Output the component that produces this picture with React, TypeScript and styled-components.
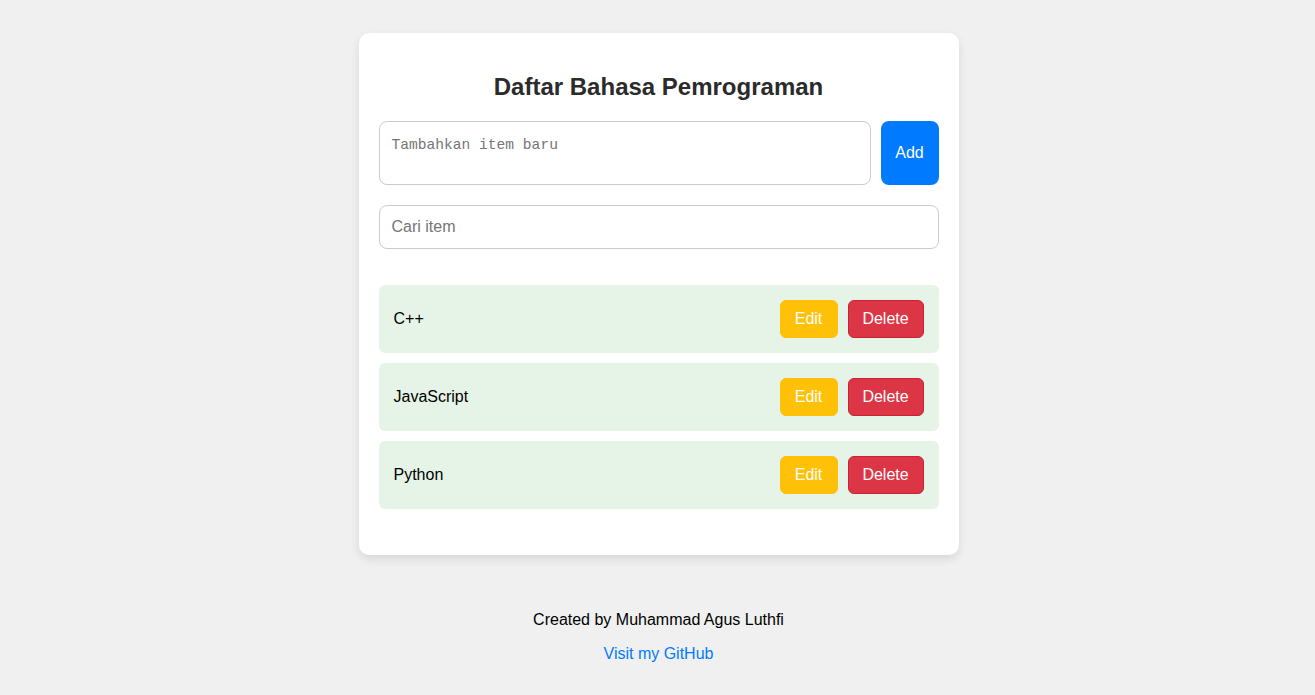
import React, { useState } from "react";
import styled, { createGlobalStyle } from "styled-components";

const GlobalStyle = createGlobalStyle`
  html, body {
    margin: 0;
    padding: 0;
    background: #f0f0f0;
    font-family: "Liberation Sans", Arial, sans-serif;
  }
`;

const Page = styled.div`
  min-height: 695px;
  box-sizing: border-box;
  padding: 33px 0 0 2px;
  display: flex;
  flex-direction: column;
  align-items: center;
`;

const Card = styled.div`
  width: 600px;
  box-sizing: border-box;
  background: #fff;
  border-radius: 10px;
  padding: 20px;
  box-shadow: 0 4px 10px rgba(0, 0, 0, 0.1);
`;

const Title = styled.h2`
  margin: 20px 0;
  text-align: center;
  font-size: 24px;
  line-height: 28px;
  font-weight: bold;
  color: #2b2b2b;
`;

const AddRow = styled.div`
  display: flex;
  gap: 10px;
  margin-bottom: 20px;
`;

const TextArea = styled.textarea`
  flex: 1;
  height: 64px;
  box-sizing: border-box;
  padding: 15px 12px 9px;
  border: 1px solid #ccc;
  border-radius: 8px;
  resize: none;
  font-family: "Liberation Mono", monospace;
  font-size: 14.6px;
  line-height: 17px;
  &::placeholder {
    color: #757575;
  }
`;

const AddButton = styled.button`
  width: 58px;
  height: 64px;
  border: none;
  border-radius: 8px;
  background: #007bff;
  color: #fff;
  font-family: "Liberation Sans", Arial, sans-serif;
  font-size: 16px;
`;

const SearchInput = styled.input`
  display: block;
  width: 100%;
  height: 44px;
  box-sizing: border-box;
  padding: 0 12px;
  border: 1px solid #ccc;
  border-radius: 8px;
  font-family: "Liberation Sans", Arial, sans-serif;
  font-size: 16px;
  margin: 0;
  &::placeholder {
    color: #757575;
  }
`;

const List = styled.ul`
  list-style: none;
  margin: 36px 0 26px;
  padding: 0;
  display: flex;
  flex-direction: column;
  gap: 10px;
`;

const Item = styled.li`
  display: flex;
  align-items: center;
  justify-content: space-between;
  height: 68px;
  box-sizing: border-box;
  padding: 0 15px;
  background: #e6f4e8;
  border-radius: 6px;
  font-size: 16px;
  color: #000;
`;

const Actions = styled.div`
  display: flex;
  gap: 10px;
`;

const ActionButton = styled.button<{ $bg: string; $border: string; $w: number }>`
  width: ${(p) => p.$w}px;
  height: 38px;
  box-sizing: border-box;
  padding: 0;
  border: 1px solid ${(p) => p.$border};
  border-radius: 6px;
  background: ${(p) => p.$bg};
  color: #fff;
  font-family: "Liberation Sans", Arial, sans-serif;
  font-size: 16px;
`;

const Footer = styled.footer`
  margin-top: 56px;
  text-align: center;
  font-size: 16px;
  line-height: 18px;
`;

const FooterText = styled.p`
  margin: 0 0 16px;
  color: #000;
`;

const FooterLink = styled.a`
  color: #007bff;
  text-decoration: none;
`;

export default function App() {
  const [items] = useState(["C++", "JavaScript", "Python"]);
  return (
    <>
      <GlobalStyle />
      <Page>
        <Card>
          <Title>Daftar Bahasa Pemrograman</Title>
          <AddRow>
            <TextArea placeholder="Tambahkan item baru" />
            <AddButton>Add</AddButton>
          </AddRow>
          <SearchInput placeholder="Cari item" />
          <List>
            {items.map((it) => (
              <Item key={it}>
                <span>{it}</span>
                <Actions>
                  <ActionButton $w={58} $bg="#ffc107" $border="#ffc107">Edit</ActionButton>
                  <ActionButton $w={76} $bg="#dc3545" $border="#c82333">Delete</ActionButton>
                </Actions>
              </Item>
            ))}
          </List>
        </Card>
        <Footer>
          <FooterText>Created by Muhammad Agus Luthfi</FooterText>
          <FooterText>
            <FooterLink href="#">Visit my GitHub</FooterLink>
          </FooterText>
        </Footer>
      </Page>
    </>
  );
}
